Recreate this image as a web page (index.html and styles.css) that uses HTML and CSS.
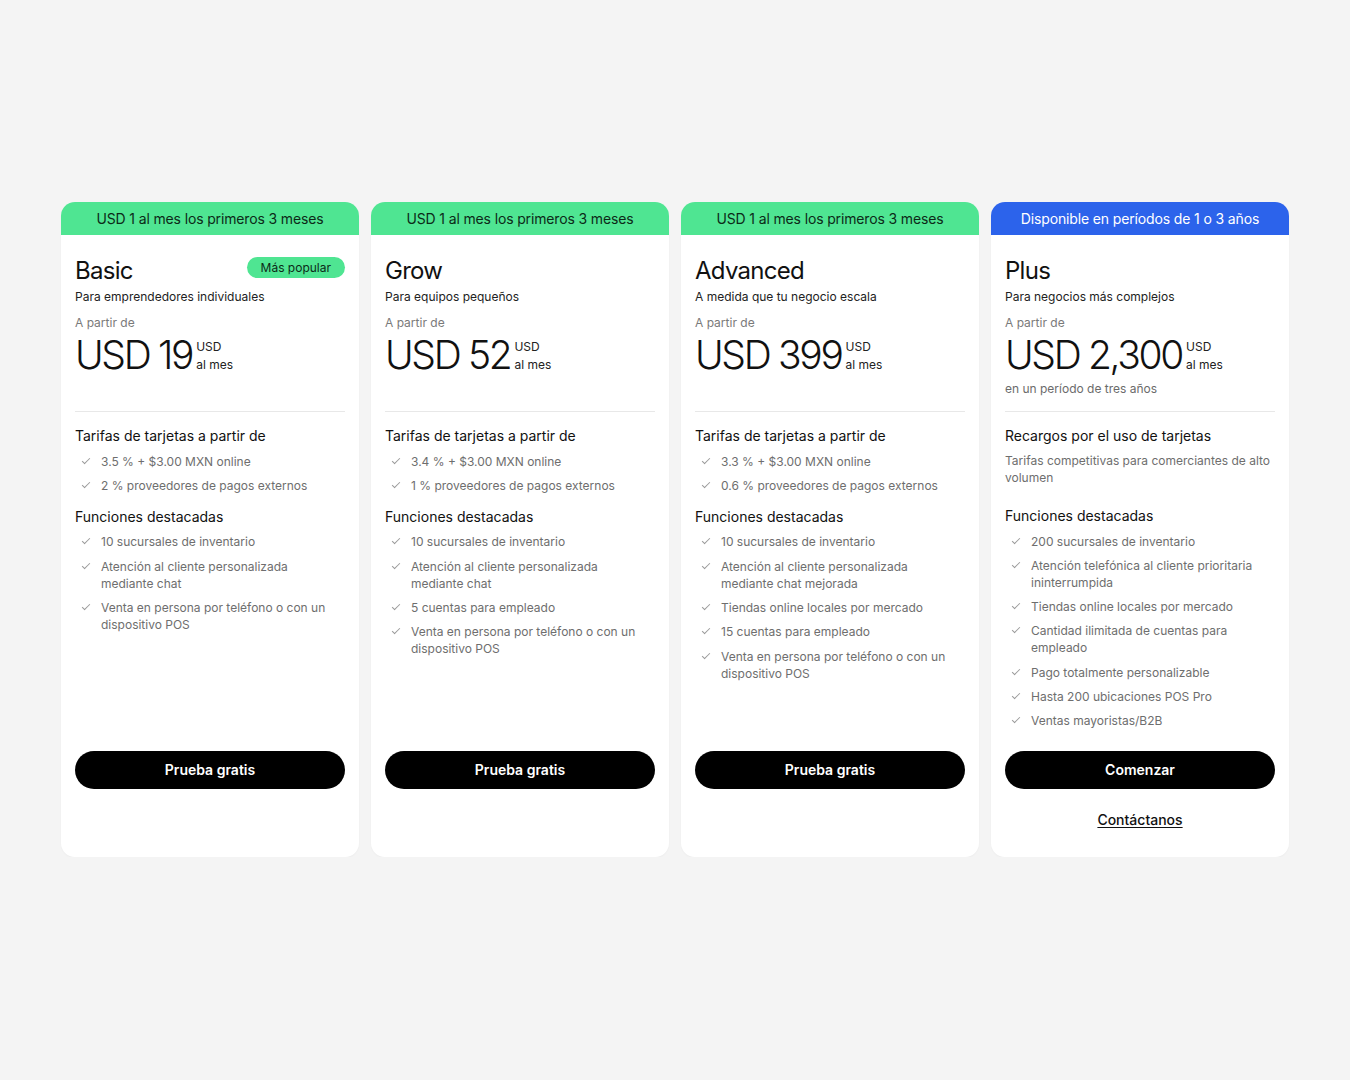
FILE: index.html
```html
<!DOCTYPE html>
<html lang="es">
<head>
  <meta charset="UTF-8">
  <meta name="viewport" content="width=device-width, initial-scale=1.0">
  <title>Planes</title>
  <link rel="stylesheet" href="styles.css">
</head>
<body>
  <div class="plans">

    <div class="plan">
      <div class="plan-banner">USD 1 al mes los primeros 3 meses</div>
      <div class="plan-body">
        <div class="plan-top">
          <div class="plan-title-row">
            <div class="plan-name">Basic</div>
            <span class="pill">Más popular</span>
          </div>
          <div class="plan-desc">Para emprendedores individuales</div>
          <div class="from">A partir de</div>
          <div class="price-row">
            <span class="price">USD 19</span>
            <span class="price-unit">USD<br>al mes</span>
          </div>
        </div>
        <div class="plan-features">
          <div class="feature-title">Tarifas de tarjetas a partir de</div>
          <ul class="checks">
            <li>3.5 % + $3.00 MXN online</li>
            <li>2 % proveedores de pagos externos</li>
          </ul>
          <div class="feature-title">Funciones destacadas</div>
          <ul class="checks">
            <li>10 sucursales de inventario</li>
            <li>Atención al cliente personalizada mediante chat</li>
            <li>Venta en persona por teléfono o con un dispositivo POS</li>
          </ul>
        </div>
        <div class="plan-footer">
          <button class="btn">Prueba gratis</button>
          <a class="contact hidden" href="#">Contáctanos</a>
        </div>
      </div>
    </div>

    <div class="plan">
      <div class="plan-banner">USD 1 al mes los primeros 3 meses</div>
      <div class="plan-body">
        <div class="plan-top">
          <div class="plan-title-row">
            <div class="plan-name">Grow</div>
          </div>
          <div class="plan-desc">Para equipos pequeños</div>
          <div class="from">A partir de</div>
          <div class="price-row">
            <span class="price">USD 52</span>
            <span class="price-unit">USD<br>al mes</span>
          </div>
        </div>
        <div class="plan-features">
          <div class="feature-title">Tarifas de tarjetas a partir de</div>
          <ul class="checks">
            <li>3.4 % + $3.00 MXN online</li>
            <li>1 % proveedores de pagos externos</li>
          </ul>
          <div class="feature-title">Funciones destacadas</div>
          <ul class="checks">
            <li>10 sucursales de inventario</li>
            <li>Atención al cliente personalizada mediante chat</li>
            <li>5 cuentas para empleado</li>
            <li>Venta en persona por teléfono o con un dispositivo POS</li>
          </ul>
        </div>
        <div class="plan-footer">
          <button class="btn">Prueba gratis</button>
          <a class="contact hidden" href="#">Contáctanos</a>
        </div>
      </div>
    </div>

    <div class="plan">
      <div class="plan-banner">USD 1 al mes los primeros 3 meses</div>
      <div class="plan-body">
        <div class="plan-top">
          <div class="plan-title-row">
            <div class="plan-name">Advanced</div>
          </div>
          <div class="plan-desc">A medida que tu negocio escala</div>
          <div class="from">A partir de</div>
          <div class="price-row">
            <span class="price">USD 399</span>
            <span class="price-unit">USD<br>al mes</span>
          </div>
        </div>
        <div class="plan-features">
          <div class="feature-title">Tarifas de tarjetas a partir de</div>
          <ul class="checks">
            <li>3.3 % + $3.00 MXN online</li>
            <li>0.6 % proveedores de pagos externos</li>
          </ul>
          <div class="feature-title">Funciones destacadas</div>
          <ul class="checks">
            <li>10 sucursales de inventario</li>
            <li>Atención al cliente personalizada mediante chat mejorada</li>
            <li>Tiendas online locales por mercado</li>
            <li>15 cuentas para empleado</li>
            <li>Venta en persona por teléfono o con un dispositivo POS</li>
          </ul>
        </div>
        <div class="plan-footer">
          <button class="btn">Prueba gratis</button>
          <a class="contact hidden" href="#">Contáctanos</a>
        </div>
      </div>
    </div>

    <div class="plan">
      <div class="plan-banner blue">Disponible en períodos de 1 o 3 años</div>
      <div class="plan-body">
        <div class="plan-top">
          <div class="plan-title-row">
            <div class="plan-name">Plus</div>
          </div>
          <div class="plan-desc">Para negocios más complejos</div>
          <div class="from">A partir de</div>
          <div class="price-row">
            <span class="price">USD 2,300</span>
            <span class="price-unit">USD<br>al mes</span>
          </div>
          <div class="price-note">en un período de tres años</div>
        </div>
        <div class="plan-features">
          <div class="feature-title">Recargos por el uso de tarjetas</div>
          <p class="feature-text">Tarifas competitivas para comerciantes de alto volumen</p>
          <div class="feature-title">Funciones destacadas</div>
          <ul class="checks">
            <li>200 sucursales de inventario</li>
            <li>Atención telefónica al cliente prioritaria ininterrumpida</li>
            <li>Tiendas online locales por mercado</li>
            <li>Cantidad ilimitada de cuentas para empleado</li>
            <li>Pago totalmente personalizable</li>
            <li>Hasta 200 ubicaciones POS Pro</li>
            <li>Ventas mayoristas/B2B</li>
          </ul>
        </div>
        <div class="plan-footer">
          <button class="btn">Comenzar</button>
          <a class="contact" href="#">Contáctanos</a>
        </div>
      </div>
    </div>

  </div>
</body>
</html>
```

FILE: styles.css
```css
body {
  font-family: Inter, "Noto Sans", sans-serif;
  background-color: #f4f4f4;
  color: #111;
  margin: 0;
  padding: 0;
}

.plans {
  display: grid;
  grid-template-columns: repeat(4, 298px);
  gap: 12px;
  justify-content: center;
  padding-top: 202px;
}

.plan {
  display: flex;
  flex-direction: column;
  background-color: #fff;
  border-radius: 14px;
  overflow: hidden;
  box-shadow: 0 1px 2px rgba(0, 0, 0, 0.03);
}

.plan-banner {
  height: 33px;
  line-height: 34px;
  text-align: center;
  font-size: 14px;
  letter-spacing: -0.01em;
  background-color: #4fe592;
  color: #0c2a18;
}

.plan-banner.blue {
  background-color: #2c63eb;
  color: #fff;
}

.plan-body {
  flex: 1;
  display: flex;
  flex-direction: column;
  padding: 20px 14px 27px;
}

.plan-top {
  min-height: 142px;
  padding-bottom: 14px;
  border-bottom: 1px solid #e8e8e8;
}

.plan-title-row {
  display: flex;
  justify-content: space-between;
  align-items: flex-start;
}

.plan-name {
  font-size: 24px;
  line-height: 31px;
  letter-spacing: -0.03em;
}

.pill {
  margin-top: 2px;
  background-color: #4fe592;
  color: #0c2a18;
  font-size: 12px;
  line-height: 21px;
  padding: 0 14px;
  border-radius: 11px;
}

.plan-desc {
  margin-top: 3px;
  font-size: 12px;
  line-height: 16px;
  color: #222;
}

.from {
  margin-top: 10px;
  font-size: 12px;
  line-height: 16px;
  color: #7a7a7a;
}

.price-row {
  display: flex;
  align-items: center;
  gap: 4px;
  height: 46px;
}

.price {
  font-size: 39px;
  letter-spacing: -0.06em;
  font-weight: 300;
}

.price-unit {
  margin-top: 4px;
  font-size: 12px;
  line-height: 18px;
  color: #222;
}

.price-note {
  margin-top: 4px;
  font-size: 12px;
  line-height: 16px;
  color: #6b6b6b;
}

.plan-features {
  flex: 1;
  padding-top: 14px;
}

.feature-title {
  font-size: 14px;
  line-height: 20px;
  color: #111;
}

.feature-text {
  margin: 6px 0 20px;
  font-size: 12px;
  line-height: 17px;
  color: #6e6e6e;
}

.checks {
  list-style: none;
  margin: 6.5px 0 13px;
  padding: 0;
  display: flex;
  flex-direction: column;
  gap: 7.33px;
}

.checks li {
  position: relative;
  padding-left: 26px;
  padding-right: 14px;
  font-size: 12px;
  line-height: 17px;
  color: #6e6e6e;
}

.checks li::before {
  content: "";
  position: absolute;
  left: 7px;
  top: 5px;
  width: 7px;
  height: 3px;
  border-left: 1px solid #9a9a9a;
  border-bottom: 1px solid #9a9a9a;
  transform: rotate(-45deg);
}

.plan-footer {
  display: flex;
  flex-direction: column;
  align-items: center;
  gap: 21px;
  padding-top: 8.5px;
}

.btn {
  width: 100%;
  height: 38px;
  border: none;
  border-radius: 19px;
  background-color: #000;
  color: #fff;
  font-family: inherit;
  font-size: 14px;
  font-weight: 600;
  cursor: pointer;
}

.contact {
  font-size: 14px;
  line-height: 20px;
  font-weight: 500;
  color: #111;
  text-decoration: underline;
  text-underline-offset: 2px;
}

.contact.hidden {
  visibility: hidden;
}
```
